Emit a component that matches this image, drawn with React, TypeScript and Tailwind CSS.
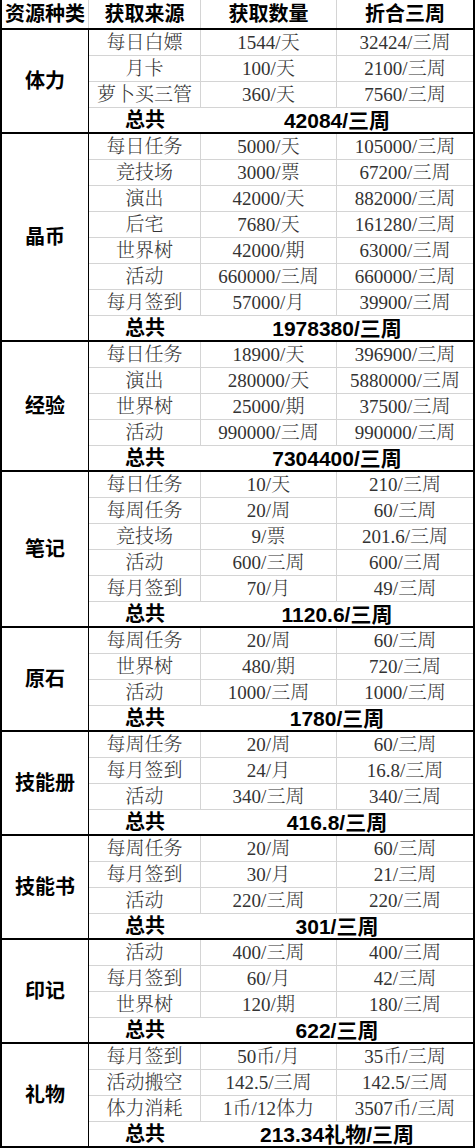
import React from "react";

type Row = [string, string, string];
type Section = { name: string; rows: Row[]; total: string };

const data: Section[] = [
  {
    name: "体力",
    rows: [
      ["每日白嫖", "1544/天", "32424/三周"],
      ["月卡", "100/天", "2100/三周"],
      ["萝卜买三管", "360/天", "7560/三周"],
    ],
    total: "42084/三周",
  },
  {
    name: "晶币",
    rows: [
      ["每日任务", "5000/天", "105000/三周"],
      ["竞技场", "3000/票", "67200/三周"],
      ["演出", "42000/天", "882000/三周"],
      ["后宅", "7680/天", "161280/三周"],
      ["世界树", "42000/期", "63000/三周"],
      ["活动", "660000/三周", "660000/三周"],
      ["每月签到", "57000/月", "39900/三周"],
    ],
    total: "1978380/三周",
  },
  {
    name: "经验",
    rows: [
      ["每日任务", "18900/天", "396900/三周"],
      ["演出", "280000/天", "5880000/三周"],
      ["世界树", "25000/期", "37500/三周"],
      ["活动", "990000/三周", "990000/三周"],
    ],
    total: "7304400/三周",
  },
  {
    name: "笔记",
    rows: [
      ["每日任务", "10/天", "210/三周"],
      ["每周任务", "20/周", "60/三周"],
      ["竞技场", "9/票", "201.6/三周"],
      ["活动", "600/三周", "600/三周"],
      ["每月签到", "70/月", "49/三周"],
    ],
    total: "1120.6/三周",
  },
  {
    name: "原石",
    rows: [
      ["每周任务", "20/周", "60/三周"],
      ["世界树", "480/期", "720/三周"],
      ["活动", "1000/三周", "1000/三周"],
    ],
    total: "1780/三周",
  },
  {
    name: "技能册",
    rows: [
      ["每周任务", "20/周", "60/三周"],
      ["每月签到", "24/月", "16.8/三周"],
      ["活动", "340/三周", "340/三周"],
    ],
    total: "416.8/三周",
  },
  {
    name: "技能书",
    rows: [
      ["每周任务", "20/周", "60/三周"],
      ["每月签到", "30/月", "21/三周"],
      ["活动", "220/三周", "220/三周"],
    ],
    total: "301/三周",
  },
  {
    name: "印记",
    rows: [
      ["活动", "400/三周", "400/三周"],
      ["每月签到", "60/月", "42/三周"],
      ["世界树", "120/期", "180/三周"],
    ],
    total: "622/三周",
  },
  {
    name: "礼物",
    rows: [
      ["每月签到", "50币/月", "35币/三周"],
      ["活动搬空", "142.5/三周", "142.5/三周"],
      ["体力消耗", "1币/12体力", "3507币/三周"],
    ],
    total: "213.34礼物/三周",
  },
];

const bold =
  "font-['Liberation_Sans','Noto_Sans_CJK_SC',sans-serif] font-bold text-black";
const body =
  "font-['Liberation_Serif','Noto_Serif_CJK_SC','Noto_Sans_CJK_SC',serif] font-light text-[#333] text-[19px]";

export default function App() {
  return (
    <div className="w-[475px] bg-white border-x-2 border-black">
      <div className="grid grid-cols-[87px_112px_136px_136px] h-[30px] border-b-2 border-black">
        {["资源种类", "获取来源", "获取数量", "折合三周"].map((h, i) => (
          <div
            key={h}
            className={`flex items-center justify-center whitespace-nowrap leading-none text-[20px] ${bold} ${
              i < 3 ? "border-r border-[#d4d4d4]" : ""
            }`}
          >
            {h}
          </div>
        ))}
      </div>
      {data.map((s) => (
        <div key={s.name} className="flex border-b-2 border-black">
          <div
            className={`w-[87px] shrink-0 border-r border-black flex items-center justify-center text-[20px] leading-none ${bold}`}
          >
            {s.name}
          </div>
          <div className="flex-1 flex flex-col">
            {s.rows.map((r, ri) => (
              <div
                key={ri}
                className="grid grid-cols-[112px_136px_136px] h-[26px] border-b border-[#d4d4d4]"
              >
                <div
                  className={`flex items-center justify-center whitespace-nowrap leading-none border-r border-[#d4d4d4] ${body}`}
                >
                  {r[0]}
                </div>
                <div
                  className={`flex items-center justify-center whitespace-nowrap leading-none border-r border-[#d4d4d4] ${body}`}
                >
                  {r[1]}
                </div>
                <div
                  className={`flex items-center justify-center whitespace-nowrap leading-none ${body}`}
                >
                  {r[2]}
                </div>
              </div>
            ))}
            <div className="grid grid-cols-[112px_272px] h-[24px]">
              <div
                className={`flex items-center justify-center leading-none text-[20px] ${bold}`}
              >
                总共
              </div>
              <div
                className={`flex items-center justify-center whitespace-nowrap leading-none text-[21px] ${bold}`}
              >
                {s.total}
              </div>
            </div>
          </div>
        </div>
      ))}
    </div>
  );
}
